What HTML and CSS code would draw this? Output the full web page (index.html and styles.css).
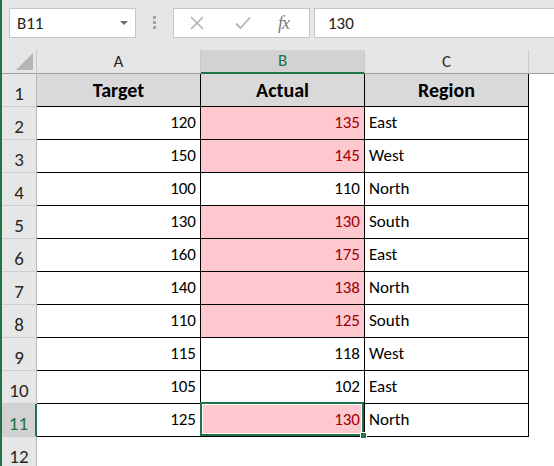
FILE: index.html
```html
<!DOCTYPE html>
<html lang="en">
  <head>
    <meta charset="UTF-8" />
    <title>Book1 - Excel</title>
    <link rel="stylesheet" href="styles.css">
  </head>
  <body>
    <div class="toolbar">
      <div class="namebox">
        <span>B11</span>
        <svg class="caret" width="8" height="4" viewBox="0 0 8 4"><path d="M0 0h8L4 4z" fill="#6f6f6f"/></svg>
      </div>
      <div class="grip"><i></i><i></i><i></i></div>
      <div class="fx-box">
        <svg class="ico cancel" width="14" height="14" viewBox="0 0 14 14"><path d="M1 1l12 12M13 1L1 13" stroke="#b3b3b3" stroke-width="1.6" fill="none"/></svg>
        <svg class="ico enter" width="16" height="14" viewBox="0 0 16 14"><path d="M1 7.5l4.5 4.5L15 1.5" stroke="#b3b3b3" stroke-width="1.8" fill="none"/></svg>
        <span class="fx">fx</span>
      </div>
      <div class="formula">130</div>
    </div>

    <div class="sheet">
      <div class="corner"><svg width="17" height="17" viewBox="0 0 17 17"><path d="M17 0V17H0z" fill="#b5b5b5"/></svg></div>
      <div class="colhead">A</div>
      <div class="colhead active">B</div>
      <div class="colhead">C</div>
      <div class="colhead last"></div>

      <div class="rowhead">1</div>
      <div class="cell head">Target</div>
      <div class="cell head">Actual</div>
      <div class="cell head">Region</div>
      <div class="blank"></div>

      <div class="rowhead">2</div>
      <div class="cell num">120</div>
      <div class="cell num bad">135</div>
      <div class="cell">East</div>
      <div class="blank"></div>

      <div class="rowhead">3</div>
      <div class="cell num">150</div>
      <div class="cell num bad">145</div>
      <div class="cell">West</div>
      <div class="blank"></div>

      <div class="rowhead">4</div>
      <div class="cell num">100</div>
      <div class="cell num">110</div>
      <div class="cell">North</div>
      <div class="blank"></div>

      <div class="rowhead">5</div>
      <div class="cell num">130</div>
      <div class="cell num bad">130</div>
      <div class="cell">South</div>
      <div class="blank"></div>

      <div class="rowhead">6</div>
      <div class="cell num">160</div>
      <div class="cell num bad">175</div>
      <div class="cell">East</div>
      <div class="blank"></div>

      <div class="rowhead">7</div>
      <div class="cell num">140</div>
      <div class="cell num bad">138</div>
      <div class="cell">North</div>
      <div class="blank"></div>

      <div class="rowhead">8</div>
      <div class="cell num">110</div>
      <div class="cell num bad">125</div>
      <div class="cell">South</div>
      <div class="blank"></div>

      <div class="rowhead">9</div>
      <div class="cell num">115</div>
      <div class="cell num">118</div>
      <div class="cell">West</div>
      <div class="blank"></div>

      <div class="rowhead">10</div>
      <div class="cell num">105</div>
      <div class="cell num">102</div>
      <div class="cell">East</div>
      <div class="blank"></div>

      <div class="rowhead active">11</div>
      <div class="cell num">125</div>
      <div class="cell num bad selected">130<span class="handle"></span></div>
      <div class="cell">North</div>
      <div class="blank"></div>

      <div class="rowhead">12</div>
      <div class="blank"></div>
      <div class="blank"></div>
      <div class="blank"></div>
      <div class="blank"></div>
    </div>
  </body>
</html>
```

FILE: styles.css
```css
html {
  font-size: 16px;
}
body {
  margin: 0;
  height: 466px;
  overflow: hidden;
  border-left: 2px solid #217346;
  background-color: #fff;
  font-family: "Carlito", "Lato", "Liberation Sans", sans-serif;
  color: #000;
}

/* formula bar */
.toolbar {
  display: flex;
  align-items: flex-start;
  height: 50px;
  box-sizing: border-box;
  padding: 8px 0 0 7px;
  background-color: #e6e6e6;
  overflow: hidden;
}
.namebox,
.fx-box,
.formula {
  box-sizing: border-box;
  height: 30px;
  border: 1px solid #c6c6c6;
  background-color: #fff;
  display: flex;
  align-items: center;
  font-size: 17px;
}
.namebox {
  width: 127px;
  padding: 0 7px 0 7px;
  justify-content: space-between;
  color: #222;
}
.grip {
  display: flex;
  flex-direction: column;
  gap: 2px;
  margin: 8px 17px 0 17px;
}
.grip i {
  display: block;
  width: 3px;
  height: 3px;
  background-color: #a3a3a3;
}
.fx-box {
  width: 137px;
  padding-left: 16px;
}
.fx-box .cancel {
  margin-right: 31px;
}
.fx-box .enter {
  margin-right: 27px;
}
.fx {
  font-family: "Liberation Serif", serif;
  font-style: italic;
  font-size: 18px;
  color: #7a7a7a;
  letter-spacing: -1px;
}
.formula {
  flex: 1;
  margin-left: 4px;
  padding-left: 13px;
  border-right: none;
  color: #222;
}

/* grid */
.sheet {
  display: grid;
  grid-template-columns: 35px 164px 164px 164px 1fr;
  grid-template-rows: 24px repeat(12, 33px);
}
.corner {
  background-color: #e6e6e6;
  border-right: 1px solid #c8c8c8;
  border-bottom: 1px solid #9f9f9f;
  display: flex;
  align-items: flex-end;
  justify-content: flex-end;
  padding: 0 3px 3px 0;
}
.colhead {
  background-color: #e6e6e6;
  border-right: 1px solid #c8c8c8;
  border-bottom: 1px solid #9f9f9f;
  text-align: center;
  line-height: 23px;
  font-size: 17px;
  color: #262626;
}
.colhead.active {
  background-color: #d2d2d2;
  border-bottom: 2px solid #217346;
  line-height: 22px;
  color: #217346;
}
.colhead.last {
  border-right: none;
}
.rowhead {
  background-color: #e6e6e6;
  border-right: 1px solid #b8b8b8;
  border-bottom: 1px solid #cdcdcd;
  display: flex;
  align-items: flex-end;
  justify-content: center;
  padding-bottom: 1px;
  font-size: 19px;
  color: #262626;
}
.rowhead.active {
  background-color: #d2d2d2;
  border-right: 2px solid #217346;
  color: #217346;
}
.cell {
  border-right: 1px solid #000;
  border-bottom: 1px solid #000;
  display: flex;
  align-items: flex-end;
  padding: 0 4px 6px 4px;
  position: relative;
  font-size: 17px;
}
.cell.num {
  justify-content: flex-end;
}
.cell.head {
  background-color: #d9d9d9;
  font-weight: 700;
  font-size: 20px;
  justify-content: center;
  padding-bottom: 4px;
}
.cell.bad {
  background-color: #ffc7ce;
  color: #9c0006;
}
.cell.selected::after {
  content: "";
  position: absolute;
  top: -2px;
  left: -1px;
  right: 0;
  bottom: 0;
  border: 2px solid #217346;
  box-shadow: inset 0 0 0 1px #fff;
}
.handle {
  position: absolute;
  right: -3px;
  bottom: -3px;
  width: 5px;
  height: 5px;
  background-color: #217346;
  border: 1px solid #fff;
  z-index: 1;
}
.blank {
  background-color: #fff;
}
```
